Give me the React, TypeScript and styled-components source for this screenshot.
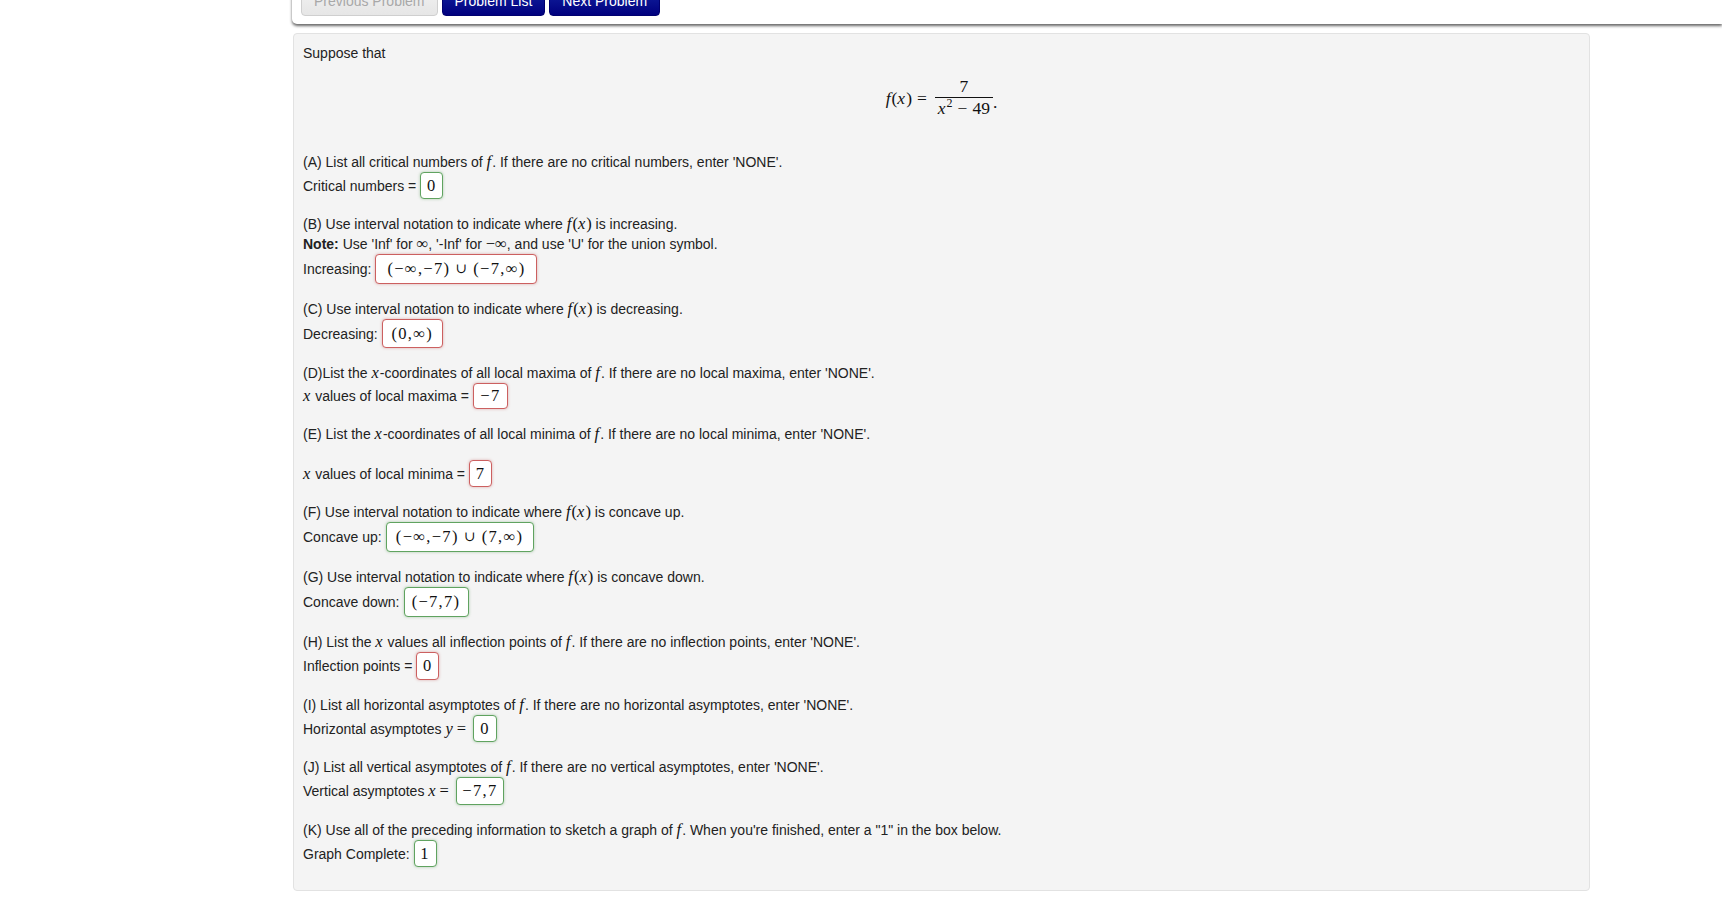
import React from "react";
import styled, { createGlobalStyle } from "styled-components";

const GlobalStyle = createGlobalStyle`
  html, body {
    margin: 0;
    padding: 0;
    background: #ffffff;
  }
  body {
    font-family: "Liberation Sans", Arial, Helvetica, sans-serif;
    font-size: 14px;
    line-height: 20px;
    color: #222222;
    overflow: hidden;
  }
`;

const Page = styled.div`
  display: flex;
  min-height: 907px;
`;

const Sidebar = styled.aside`
  flex: 0 0 292px;
`;

const Main = styled.main`
  flex: 1 1 auto;
  min-width: 0;
`;

const Toolbar = styled.nav`
  display: flex;
  gap: 4px;
  margin-top: -20px;
  padding: 6px 8px 8px 9px;
  background: #ffffff;
  border-radius: 0 0 0 5px;
  box-shadow: 0 2px 3px rgba(0, 0, 0, 0.6);
`;

const NavButton = styled.button<{ $primary?: boolean }>`
  box-sizing: border-box;
  height: 30px;
  padding: 4px 12px 6px;
  border-radius: 4px;
  font-family: "Liberation Sans", Arial, sans-serif;
  font-size: 14px;
  line-height: 20px;
  cursor: pointer;
  border: 1px solid ${(p) => (p.$primary ? "#000070" : "#cfcfcf")};
  color: ${(p) => (p.$primary ? "#ffffff" : "#a8a8a8")};
  background: ${(p) =>
    p.$primary
      ? "linear-gradient(#1426a3, #00007e)"
      : "linear-gradient(#f2f2f2, #e6e6e6)"};
`;

const Panel = styled.section`
  box-sizing: border-box;
  width: 1297px;
  margin: 9px 0 0 1px;
  padding: 9px 9px 23px 9px;
  background: #f4f4f4;
  border: 1px solid #e2e2e2;
  border-radius: 4px;
`;

const Line = styled.div`
  line-height: 20px;
  white-space: nowrap;
`;

const Display = styled.div`
  box-sizing: border-box;
  height: 89px;
  padding-top: 14px;
  display: flex;
  justify-content: center;
  align-items: flex-start;
`;

const Formula = styled.span`
  display: inline-flex;
  align-items: center;
  font-family: "Liberation Serif", "DejaVu Serif", serif;
  font-size: 17.5px;
  color: #111;
`;

const Fraction = styled.span`
  display: inline-flex;
  flex-direction: column;
  align-items: center;
  margin: 0 0 0 3px;
`;

const Numer = styled.span`
  line-height: 19px;
  padding: 0 3px 1px;
`;

const Bar = styled.span`
  align-self: stretch;
  height: 1px;
  background: #111;
`;

const Denom = styled.span`
  line-height: 19px;
  padding: 1px 3px 0;
`;

const Period = styled.span`
  align-self: center;
  margin-top: 8px;
`;

const Sup = styled.sup`
  font-size: 12px;
  line-height: 0;
  vertical-align: 7px;
`;

const M = styled.span`
  font-family: "Liberation Serif", "DejaVu Serif", serif;
  font-size: 16.5px;
  color: #111;
`;

const V = styled.i`
  font-style: italic;
  margin-right: 1px;
`;

const Op = styled.span<{ $tight?: boolean }>`
  margin: 0 ${(p) => (p.$tight ? 3 : 5)}px;
`;

const Stack = styled.div`
  display: flex;
  flex-direction: column;
  gap: 15px;
`;

const Block = styled.div`
  display: flex;
  flex-direction: column;
`;

const Spacer = styled.div<{ $h: number }>`
  height: ${(p) => p.$h}px;
`;

const Row = styled.div`
  display: flex;
  align-items: center;
  gap: 4px;
  white-space: nowrap;
`;

const AnswerBox = styled.span<{ $ok: boolean; $w: number; $h: number }>`
  box-sizing: border-box;
  display: inline-flex;
  align-items: center;
  justify-content: center;
  width: ${(p) => p.$w}px;
  height: ${(p) => p.$h}px;
  background: #ffffff;
  border: 1px solid ${(p) => (p.$ok ? "rgb(96, 163, 96)" : "rgb(204, 96, 96)")};
  border-radius: 4px;
  box-shadow: 0 0 3px
    ${(p) => (p.$ok ? "rgba(81, 153, 81, 0.45)" : "rgba(191, 84, 84, 0.45)")};
  font-family: "Liberation Serif", "DejaVu Serif", serif;
  font-size: 16.5px;
  color: #111;
  letter-spacing: 1.3px;
`;

const Cup = styled.span`
  margin: 0 5px;
  font-size: 14px;
`;

const F = () => (
  <M>
    <V>f</V>
  </M>
);
const X = () => (
  <M>
    <V>x</V>
  </M>
);
const Fx = () => (
  <M>
    <V>f</V>(<V>x</V>)
  </M>
);

type Ans = { ok: boolean; w: number; h: number; content: React.ReactNode };

const Answer = ({ a }: { a: Ans }) => (
  <AnswerBox $ok={a.ok} $w={a.w} $h={a.h}>
    {a.content}
  </AnswerBox>
);

export default function App() {
  return (
    <>
      <GlobalStyle />
      <Page>
        <Sidebar />
        <Main>
          <Toolbar>
            <NavButton disabled>Previous Problem</NavButton>
            <NavButton $primary>Problem List</NavButton>
            <NavButton $primary>Next Problem</NavButton>
          </Toolbar>
          <Panel>
            <Line>Suppose that</Line>
            <Display>
              <Formula>
                <span>
                  <V>f</V>(<V>x</V>)
                </span>
                <Op>=</Op>
                <Fraction>
                  <Numer>7</Numer>
                  <Bar />
                  <Denom>
                    <V>x</V>
                    <Sup>2</Sup>
                    <Op>−</Op>49
                  </Denom>
                </Fraction>
                <Period>.</Period>
              </Formula>
            </Display>
            <Stack>
              <Block>
                <Line>
                  (A) List all critical numbers of <F />. If there are no critical numbers, enter 'NONE'.
                </Line>
                <Row>
                  Critical numbers =
                  <Answer a={{ ok: true, w: 23, h: 27, content: "0" }} />
                </Row>
              </Block>
              <Block>
                <Line>
                  (B) Use interval notation to indicate where <Fx /> is increasing.
                </Line>
                <Line>
                  <b>Note:</b> Use 'Inf' for <M>∞</M>, '-Inf' for <M>−∞</M>, and use 'U' for the union symbol.
                </Line>
                <Row>
                  Increasing:
                  <Answer
                    a={{
                      ok: false,
                      w: 162,
                      h: 30,
                      content: (
                        <>
                          (−∞,−7)<Cup>∪</Cup>(−7,∞)
                        </>
                      ),
                    }}
                  />
                </Row>
              </Block>
              <Block>
                <Line>
                  (C) Use interval notation to indicate where <Fx /> is decreasing.
                </Line>
                <Row>
                  Decreasing:
                  <Answer a={{ ok: false, w: 61, h: 29, content: "(0,∞)" }} />
                </Row>
              </Block>
              <Block>
                <Line>
                  (D)List the <X />-coordinates of all local maxima of <F />. If there are no local maxima, enter 'NONE'.
                </Line>
                <Row>
                  <span>
                    <X /> values of local maxima =
                  </span>
                  <Answer a={{ ok: false, w: 35, h: 26, content: "−7" }} />
                </Row>
              </Block>
              <Block>
                <Line>
                  (E) List the <X />-coordinates of all local minima of <F />. If there are no local minima, enter 'NONE'.
                </Line>
                <Spacer $h={16} />
                <Row>
                  <span>
                    <X /> values of local minima =
                  </span>
                  <Answer a={{ ok: false, w: 23, h: 27, content: "7" }} />
                </Row>
              </Block>
              <Block>
                <Line>
                  (F) Use interval notation to indicate where <Fx /> is concave up.
                </Line>
                <Row>
                  Concave up:
                  <Answer
                    a={{
                      ok: true,
                      w: 148,
                      h: 30,
                      content: (
                        <>
                          (−∞,−7)<Cup>∪</Cup>(7,∞)
                        </>
                      ),
                    }}
                  />
                </Row>
              </Block>
              <Block>
                <Line>
                  (G) Use interval notation to indicate where <Fx /> is concave down.
                </Line>
                <Row>
                  Concave down:
                  <Answer a={{ ok: true, w: 65, h: 30, content: "(−7,7)" }} />
                </Row>
              </Block>
              <Block>
                <Line>
                  (H) List the <X /> values all inflection points of <F />. If there are no inflection points, enter 'NONE'.
                </Line>
                <Row>
                  Inflection points =
                  <Answer a={{ ok: false, w: 23, h: 28, content: "0" }} />
                </Row>
              </Block>
              <Block>
                <Line>
                  (I) List all horizontal asymptotes of <F />. If there are no horizontal asymptotes, enter 'NONE'.
                </Line>
                <Row>
                  <span>
                    Horizontal asymptotes{" "}
                    <M>
                      <V>y</V>
                      <Op $tight>=</Op>
                    </M>
                  </span>
                  <Answer a={{ ok: true, w: 24, h: 27, content: "0" }} />
                </Row>
              </Block>
              <Block>
                <Line>
                  (J) List all vertical asymptotes of <F />. If there are no vertical asymptotes, enter 'NONE'.
                </Line>
                <Row>
                  <span>
                    Vertical asymptotes{" "}
                    <M>
                      <V>x</V>
                      <Op $tight>=</Op>
                    </M>
                  </span>
                  <Answer a={{ ok: true, w: 48, h: 28, content: "−7,7" }} />
                </Row>
              </Block>
              <Block>
                <Line>
                  (K) Use all of the preceding information to sketch a graph of <F />. When you're finished, enter a "1" in the box below.
                </Line>
                <Row>
                  Graph Complete:
                  <Answer a={{ ok: true, w: 23, h: 27, content: "1" }} />
                </Row>
              </Block>
            </Stack>
          </Panel>
        </Main>
      </Page>
    </>
  );
}
